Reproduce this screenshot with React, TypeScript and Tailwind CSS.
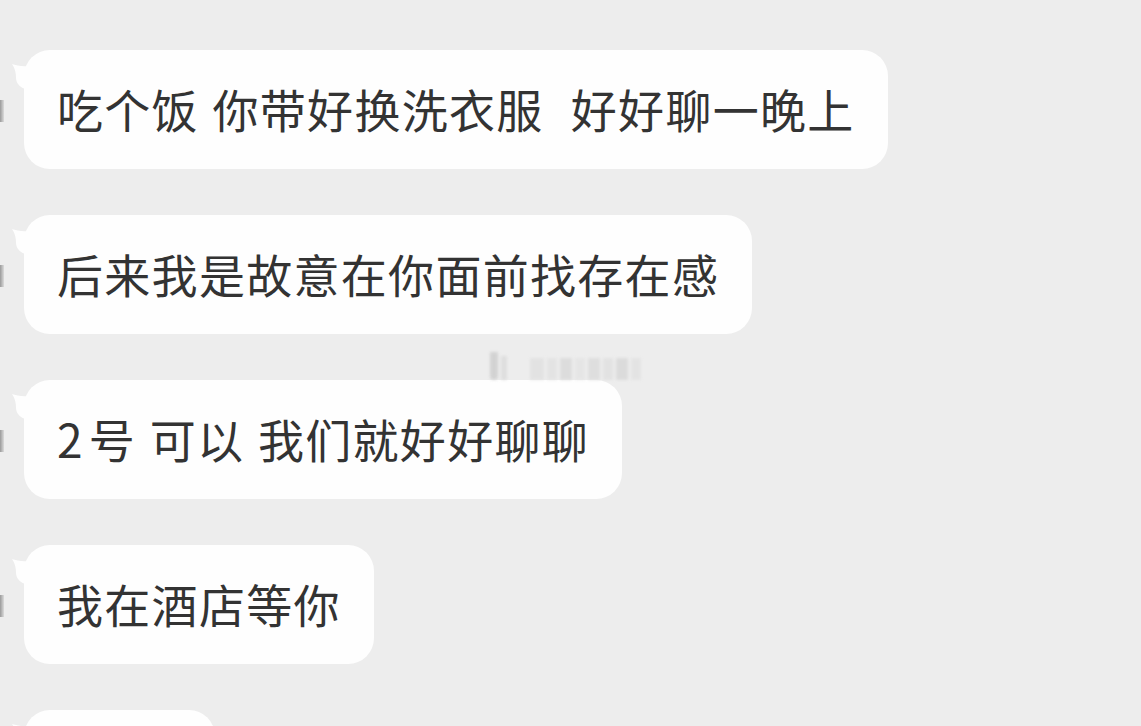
const messages = [
  '吃个饭 你带好换洗衣服  好好聊一晚上',
  '后来我是故意在你面前找存在感',
  '2号 可以 我们就好好聊聊',
  '我在酒店等你',
  '',
];

function Tail() {
  return (
    <svg className="absolute -left-[12px] top-[14px]" width="16" height="26" viewBox="0 0 16 26">
      <path d="M16 2 C10 3 4 1 0 0 C3 4 4 9 4 14 C4 19 8 24 16 26 Z" fill="#fefefe" />
    </svg>
  );
}

function Bubble({ text }: { text: string }) {
  const lead = text.startsWith('2') ? '2' : '';
  const rest = lead ? text.slice(1) : text;
  return (
    <div className="relative flex items-center">
      <div className="absolute -left-[24px] top-[50px] h-[22px] w-[4px] bg-gradient-to-r from-[#9a9a9a] to-[#dcdcdc] blur-[0.5px]" />
      <div className="relative h-[119px] rounded-[26px] bg-[#fefefe] pl-[33px] pr-[33px] flex items-center min-w-[191px]">
        <Tail />
        <span className="whitespace-pre text-[46px] font-normal leading-none tracking-[1.3px] [word-spacing:2px] text-[#333333] -translate-y-[2px]">
          {lead && <span className="mr-[5px]">{lead}</span>}
          {rest}
        </span>
      </div>
    </div>
  );
}

export default function App() {
  return (
    <div
      className="relative h-[726px] w-[1141px] overflow-hidden bg-[#ededed]"
      style={{ fontFamily: '"Noto Sans CJK SC", "Noto Sans", sans-serif' }}
    >
      <div className="flex flex-col items-start gap-[46px] pl-[24px] pt-[50px]">
        {messages.map((m, i) => (
          <Bubble key={i} text={m} />
        ))}
      </div>
      {/* faded watermark */}
      <div className="absolute left-[490px] top-[350px] flex h-[30px] items-end gap-[3px] opacity-70 blur-[1.5px]">
        <div className="h-[28px] w-[8px] rounded-b-full bg-[#c8c8c8]" />
        <div className="h-[24px] w-[6px] bg-[#d8d8d8]" />
        <div className="ml-[20px] h-[22px] w-[14px] bg-[#dedede]" />
        <div className="h-[22px] w-[10px] bg-[#e0e0e0]" />
        <div className="h-[22px] w-[12px] bg-[#d6d6d6]" />
        <div className="h-[22px] w-[10px] bg-[#e2e2e2]" />
        <div className="h-[22px] w-[12px] bg-[#d8d8d8]" />
        <div className="h-[22px] w-[10px] bg-[#dedede]" />
        <div className="h-[22px] w-[12px] bg-[#d4d4d4]" />
        <div className="h-[22px] w-[10px] bg-[#e0e0e0]" />
      </div>
    </div>
  );
}
